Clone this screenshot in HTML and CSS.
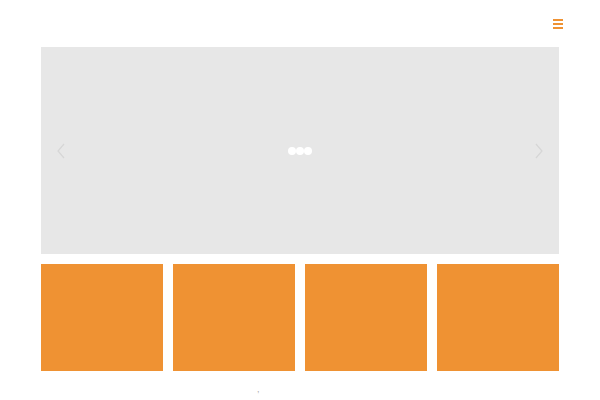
FILE: index.html
```html
<!DOCTYPE html>
<html>
<head>
<meta charset="utf-8">
<link rel="stylesheet" href="styles.css">
</head>
<body>
<header class="top">
  <svg class="menu" width="10" height="10" viewBox="0 0 10 10"><rect x="0" y="0" width="10" height="2" fill="#ef9233"/><rect x="0" y="4" width="10" height="2" fill="#ef9233"/><rect x="0" y="8" width="10" height="2" fill="#ef9233"/></svg>
</header>
<main class="wrap">
  <section class="slider">
    <svg class="arrow" width="8" height="16" viewBox="0 0 8 16"><path d="M7 1 L1 8 L7 15" fill="none" stroke="#d6d6d6" stroke-width="1.2"/></svg>
    <div class="dots"><span></span><span></span><span></span></div>
    <svg class="arrow" width="8" height="16" viewBox="0 0 8 16"><path d="M1 1 L7 8 L1 15" fill="none" stroke="#d6d6d6" stroke-width="1.2"/></svg>
  </section>
  <section class="thumbs">
    <div class="thumb"></div>
    <div class="thumb"></div>
    <div class="thumb"></div>
    <div class="thumb"></div>
  </section>
  <footer class="foot"><span class="tick">,</span></footer>
</main>
</body>
</html>
```
FILE: styles.css
```css
html, body { margin: 0; padding: 0; background: #fff; font-family: "Liberation Sans", Arial, sans-serif; }
.top { height: 47px; display: flex; justify-content: flex-end; align-items: flex-start; padding: 0 37px 0 0; box-sizing: border-box; }
.menu { margin-top: 19px; display: block; }
.wrap { padding: 0 41px; }
.slider { height: 207px; background: #e7e7e7; display: flex; align-items: center; justify-content: space-between; padding: 0 16px; box-sizing: border-box; }
.arrow { display: block; margin-top: 1px; }
.dots { display: flex; gap: 0; margin-top: 1px; }
.dots span { width: 8px; height: 8px; border-radius: 50%; background: #fff; display: block; }
.thumbs { margin-top: 10px; display: grid; grid-template-columns: repeat(4, 1fr); gap: 10px; }
.thumb { height: 107px; background: #ef9233; }
.foot { height: 29px; display: flex; justify-content: flex-start; padding-left: 216px; }
.tick { font-size: 9px; color: #aaa; line-height: 1; margin-top: 14px; }
```
